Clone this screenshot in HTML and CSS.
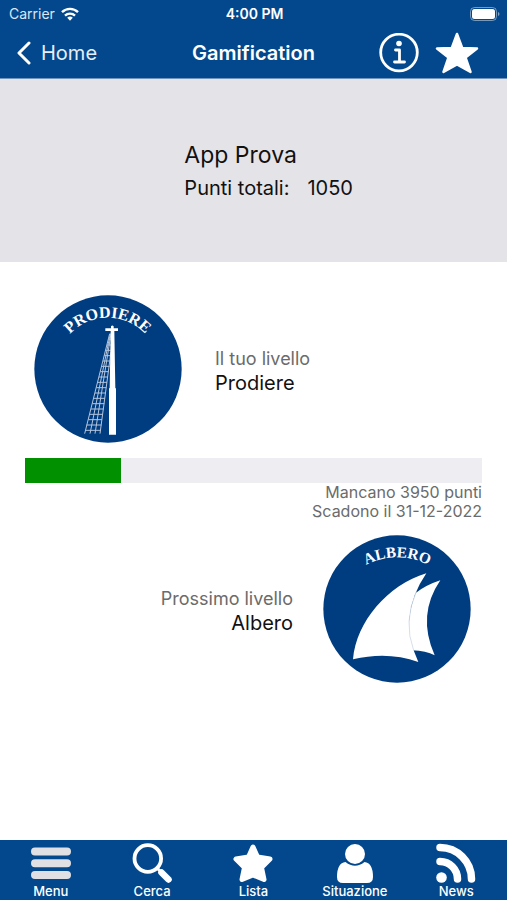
FILE: index.html
```html
<!DOCTYPE html>
<html lang="it">
<head>
<meta charset="utf-8">
<meta name="viewport" content="width=device-width, initial-scale=1">
<title>Gamification</title>
<link rel="stylesheet" href="styles.css">
</head>
<body>
<header class="top">
  <div class="status">
    <span class="carrier">Carrier
      <svg class="wifi" viewBox="0 0 18 14" aria-hidden="true"><g fill="none" stroke="currentColor" stroke-width="2.4"><path d="M1 5.2a11.4 11.4 0 0 1 16 0"/><path d="M4 8.6a7.2 7.2 0 0 1 10 0"/></g><path d="M6.2 10.8a4 4 0 0 1 5.6 0L9 13.8z" fill="currentColor"/></svg>
    </span>
    <time class="clock">4:00 PM</time>
    <svg class="battery" viewBox="0 0 30 14" aria-hidden="true"><rect x=".5" y=".5" width="26" height="13" rx="4" fill="none" stroke="#fff" stroke-opacity=".45"/><rect x="2" y="2" width="23" height="10" rx="2.5" fill="#fff"/><path d="M28 5v4q1.500-.5 1.500-2T28 5z" fill="#fff" fill-opacity=".5"/></svg>
  </div>
  <nav class="bar">
    <a class="back" href="#">
      <svg class="chevron" viewBox="0 0 14 24" aria-hidden="true"><path d="M12 2 2 12l10 10" fill="none" stroke="currentColor" stroke-width="3" stroke-linecap="round" stroke-linejoin="round"/></svg>
      Home
    </a>
    <h1 class="title">Gamification</h1>
    <div class="actions">
      <button class="action" type="button" aria-label="Informazioni">
        <svg class="info" viewBox="0 0 40 40" aria-hidden="true"><circle cx="20" cy="19.500" r="18.300" fill="none" stroke="currentColor" stroke-width="2.800"/><circle cx="20" cy="10.500" r="2.800" fill="currentColor"/><path d="M16.500 17h4v11.500M15.500 29h10" fill="none" stroke="currentColor" stroke-width="2.800" stroke-linecap="round" stroke-linejoin="round"/></svg>
      </button>
      <button class="action" type="button" aria-label="Preferiti">
        <svg class="star" viewBox="0 0 44 42" aria-hidden="true"><path d="M22 2 27.200 16 42 16.500 30.500 25.500 35.500 40 22 32.500 8.500 40 13.500 25.500 2 16.500 16.800 16z" fill="currentColor" stroke="currentColor" stroke-width="2.500" stroke-linejoin="round"/></svg>
      </button>
    </div>
  </nav>
</header>

<section class="profile">
  <div class="summary">
    <h2 class="name">App Prova</h2>
    <p class="points"><span>Punti totali:</span><span>1050</span></p>
  </div>
</section>

<main class="levels">
  <section class="level">
    <svg class="badge" viewBox="26 30 444 444" aria-hidden="true">
      <defs><path id="arc-prodiere" d="M93 252a154 154 0 0 1 308 0"/></defs>
      <circle cx="248" cy="252" r="221" fill="#003c80"/>
      <text class="badge-name" font-size="48"><textPath href="#arc-prodiere" startOffset="50%">PRODIERE</textPath></text>
      <g fill="none" stroke="#b5c6dc" stroke-width="3">
        <path d="M253 146 178 446M255 146 194 446M257 146 209 446M257 200 224 446"/>
        <path d="M249 164h7M245 180h11M241 196h15M237 212h18M233 228h22M229 244h24M225 260h25M221 276h27M217 292h28M213 308h30M209 324h32M205 340h34M201 356h36M197 372h38M193 388h39M189 404h41M184 420h44M180 436h46"/>
      </g>
      <path d="M257 124q4-5 8 0v6h13v8h-11l3 172h2v139h-21V310h2l3-172h-16v-8h17z" fill="#fff"/>
    </svg>
    <p class="caption"><span class="hint">Il tuo livello</span><strong class="rank">Prodiere</strong></p>
  </section>

  <div class="track">
    <progress class="meter" value="1050" max="5000" aria-label="Punti totali"></progress>
    <p class="note">Mancano 3950 punti<br>Scadono il 31-12-2022</p>
  </div>

  <section class="level level-next">
    <p class="caption"><span class="hint">Prossimo livello</span><strong class="rank">Albero</strong></p>
    <svg class="badge" viewBox="26 30 444 444" aria-hidden="true">
      <defs><path id="arc-albero" d="M49 297a200 200 0 0 1 400 0"/></defs>
      <circle cx="248" cy="252" r="221" fill="#003c80"/>
      <text class="badge-name" font-size="46"><textPath href="#arc-albero" startOffset="50%">ALBERO</textPath></text>
      <path d="M378 166Q307 270 361 391 335 378 294 376 270 290 304 204 335 180 378 166z" fill="#fff"/>
      <path d="M336 145Q248 274 312 411 220 378 116 403C126 290 220 180 336 145z" fill="#fff"/>
      <path d="M306 200Q266 290 298 376" fill="none" stroke="#c3cfdf" stroke-width="2"/>
    </svg>
  </section>
</main>

<nav class="tabs">
  <a class="tab" href="#">
    <svg class="tab-icon" viewBox="0 0 40 40" aria-hidden="true"><path d="M4 8.500h32M4 20.200h32M4 32h32" stroke="#e0e0e4" stroke-width="8" stroke-linecap="round"/></svg>
    Menu
  </a>
  <a class="tab" href="#">
    <svg class="tab-icon" viewBox="0 0 40 40" aria-hidden="true"><g fill="none" stroke="currentColor" stroke-linecap="round"><circle cx="15.800" cy="15.500" r="13.300" stroke-width="3.800"/><path d="m25 25 3 3" stroke-width="3"/><path d="m29.500 29.500 7 7" stroke-width="6.500"/></g></svg>
    Cerca
  </a>
  <a class="tab" href="#">
    <svg class="tab-icon" viewBox="0 0 40 40" aria-hidden="true"><path d="M20 4 24.500 14 37 16 28.500 24.500 31 36.500 20 32 9 36.500 11.500 24.500 3 16 15.500 14z" fill="currentColor" stroke="currentColor" stroke-width="5" stroke-linejoin="round"/></svg>
    Lista
  </a>
  <a class="tab" href="#">
    <svg class="tab-icon" viewBox="0 0 40 40" aria-hidden="true"><g fill="currentColor"><circle cx="20" cy="11" r="10"/><path d="M10.500 19Q20 26.500 29.500 19 38 20 38 34 38 40 32 40H8Q2 40 2 34 2 20 10.500 19z"/></g></svg>
    Situazione
  </a>
  <a class="tab" href="#">
    <svg class="tab-icon" viewBox="0 0 40 40" aria-hidden="true"><circle cx="5.500" cy="34.500" r="5.300" fill="currentColor"/><path d="M4 18.500A17.500 17.500 0 0 1 21.500 36M4 4.500A31.500 31.500 0 0 1 35.500 36" fill="none" stroke="currentColor" stroke-width="7.500" stroke-linecap="round"/></svg>
    News
  </a>
</nav>
</body>
</html>
```
FILE: styles.css
```css
* {
  box-sizing: border-box;
}

body {
  margin: 0;
  min-height: 100vh;
  display: flex;
  flex-direction: column;
  background: #fff;
  color: #111;
  font-family: Inter, "Liberation Sans", sans-serif;
}

h1, h2, p {
  margin: 0;
}

a {
  color: inherit;
  text-decoration: none;
}

.top {
  background: #03488c;
  color: #fff;
  border-bottom: 1px solid #6f95be;
}

.status {
  display: grid;
  grid-template-columns: 1fr auto 1fr;
  align-items: center;
  height: 27px;
  padding: 0 7px 0 9px;
  font-size: 14px;
}

.carrier {
  display: flex;
  align-items: center;
  gap: 6px;
  color: #dbe7f4;
}

.wifi {
  width: 18px;
  height: 14px;
  color: #fff;
}

.clock {
  font-weight: 600;
}

.battery {
  justify-self: end;
  width: 30px;
  height: 14px;
}

.bar {
  display: grid;
  grid-template-columns: 1fr auto 1fr;
  align-items: center;
  height: 51px;
  padding: 0 17px;
}

.back {
  display: flex;
  align-items: center;
  gap: 10px;
  font-size: 20px;
  color: #e6eef8;
}

.chevron {
  width: 14px;
  height: 24px;
  color: #fff;
}

.title {
  font-size: 20px;
  font-weight: 600;
}

.actions {
  display: flex;
  align-items: center;
  justify-content: flex-end;
  gap: 16px;
  padding-right: 11px;
}

.action {
  display: flex;
  padding: 0;
  border: 0;
  background: none;
  color: #fff;
}

.info {
  width: 40px;
  height: 40px;
}

.star {
  width: 44px;
  height: 42px;
}

.profile {
  display: grid;
  grid-template-columns: 4fr 7fr;
  align-items: center;
  min-height: 183px;
  padding-top: 1px;
  background: #e4e3e8;
}

.summary {
  grid-column: 2;
}

.name {
  font-size: 23px;
  font-weight: 400;
  line-height: 34px;
}

.points {
  display: flex;
  gap: 18px;
  font-size: 20px;
  line-height: 32px;
}

.levels {
  flex: 1;
  padding: 33px 25px;
}

.level {
  display: flex;
  align-items: center;
  gap: 33px;
  padding: 0 9px;
}

.level-next {
  justify-content: flex-end;
  gap: 30px;
  padding: 0 11px;
}

.badge {
  flex: none;
  width: 148px;
  height: 148px;
}

.badge-name {
  fill: #fff;
  font-family: "Liberation Serif", serif;
  font-weight: 700;
  text-anchor: middle;
}

.caption {
  display: flex;
  flex-direction: column;
  padding-top: 4px;
  line-height: 24px;
}

.level-next .caption {
  text-align: right;
}

.hint {
  color: #6b6b6b;
  font-size: 18px;
}

.rank {
  font-size: 20px;
  font-weight: 400;
}

.track {
  padding: 15px 0 14px;
}

.meter {
  display: block;
  width: 100%;
  height: 25px;
  border: 0;
  appearance: none;
  background: #eeedf2;
}

.meter::-webkit-progress-bar {
  background: #eeedf2;
}

.meter::-webkit-progress-value {
  background: #009000;
}

.note {
  color: #6b6b6b;
  font-size: 16px;
  line-height: 19px;
  text-align: right;
}

.tabs {
  display: grid;
  grid-template-columns: repeat(5, 1fr);
  height: 60px;
  padding-top: 3px;
  background: #03488c;
  color: #fff;
}

.tab {
  display: flex;
  flex-direction: column;
  align-items: center;
  font-size: 13px;
  font-weight: 500;
  line-height: 16px;
}

.tab-icon {
  width: 40px;
  height: 40px;
}
```
